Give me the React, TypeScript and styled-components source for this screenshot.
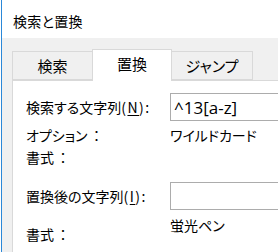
import React from "react";
import styled, { createGlobalStyle } from "styled-components";

const Global = createGlobalStyle`
  html, body { margin: 0; padding: 0; background: #ffffff; }
  body {
    font-family: "Noto Sans CJK JP", "Noto Sans", sans-serif;
    font-feature-settings: "palt";
    color: #000000;
  }
`;

const Frame = styled.div`
  width: 277px;
  height: 252px;
  margin-left: 1px;
  border-left: 1px solid #2b88d8;
  display: flex;
  flex-direction: column;
  overflow: hidden;
`;

const TitleBar = styled.div`
  height: 38px;
  flex: none;
  background: #ffffff;
  display: flex;
  align-items: center;
  padding-left: 11px;
  padding-top: 4px;
  box-sizing: border-box;
  font-size: 14px;
  letter-spacing: 0.3px;
`;

const Body = styled.div`
  flex: 1;
  background: #f0f0f0;
  padding: 11px 0 0 10px;
  display: flex;
  flex-direction: column;
`;

const TabRow = styled.div`
  display: flex;
  align-items: flex-end;
  height: 31px;
  position: relative;
  z-index: 1;
`;

const Tab = styled.div<{ $active?: boolean; $w: number }>`
  box-sizing: border-box;
  width: ${(p) => p.$w}px;
  height: ${(p) => (p.$active ? 32 : 29)}px;
  margin-bottom: ${(p) => (p.$active ? -1 : 0)}px;
  margin-left: ${(p) => (p.$active ? -1 : 0)}px;
  margin-right: ${(p) => (p.$active ? -1 : 0)}px;
  border: 1px solid #d9d9d9;
  border-bottom: ${(p) => (p.$active ? "none" : "1px solid #d9d9d9")};
  background: ${(p) => (p.$active ? "#ffffff" : "#f0f0f0")};
  display: flex;
  justify-content: center;
  align-items: center;
  padding-bottom: ${(p) => (p.$active ? 5 : 0)}px;
  font-size: 15px;
  z-index: ${(p) => (p.$active ? 2 : 1)};
`;

const Panel = styled.div`
  flex: 1;
  background: #ffffff;
  border: 1px solid #d9d9d9;
  border-right: none;
  border-bottom: none;
  padding: 12px 0 0 13px;
  display: flex;
  flex-direction: column;
  font-size: 14px;
`;

const Row = styled.div<{ $h: number; $mt?: number; $align?: string }>`
  display: grid;
  grid-template-columns: 144px 1fr;
  height: ${(p) => p.$h}px;
  margin-top: ${(p) => p.$mt ?? 0}px;
  align-items: ${(p) => p.$align ?? "center"};
`;

const Label = styled.span<{ $pt?: number }>`
  white-space: nowrap;
  padding-top: ${(p) => p.$pt ?? 0}px;
  line-height: 20px;
`;

const Value = styled.span`
  white-space: nowrap;
  line-height: 20px;
`;

const Access = styled.span`
  letter-spacing: 1.5px;
`;

const Key = styled.span`
  text-decoration: underline;
  text-underline-offset: 2px;
`;

const Colon = styled.span`
  font-feature-settings: normal;
  margin-left: 2px;
`;

const Input = styled.div`
  box-sizing: border-box;
  height: 28px;
  border: 1px solid #acacac;
  border-right: none;
  background: #ffffff;
  padding-left: 3px;
  display: flex;
  align-items: center;
  font-family: "Open Sans", "Noto Sans", sans-serif;
  font-size: 17px;
  font-feature-settings: normal;
`;

export default function App() {
  return (
    <>
      <Global />
      <Frame>
        <TitleBar>検索と置換</TitleBar>
        <Body>
          <TabRow>
            <Tab $w={81}>検索</Tab>
            <Tab $w={80} $active>置換</Tab>
            <Tab $w={82}>ジャンプ</Tab>
          </TabRow>
          <Panel>
            <Row $h={28}>
              <Label>
                検索する文字列<Access>(<Key>N</Key>):</Access>
              </Label>
              <Input>^13[a-z]</Input>
            </Row>
            <Row $h={22} $mt={3}>
              <Label>
                オプション<Colon>：</Colon>
              </Label>
              <Value>ワイルドカード</Value>
            </Row>
            <Row $h={22}>
              <Label>
                書式<Colon>：</Colon>
              </Label>
              <Value />
            </Row>
            <Row $h={28} $mt={14}>
              <Label>
                置換後の文字列<Access>(<Key>I</Key>):</Access>
              </Label>
              <Input />
            </Row>
            <Row $h={34} $mt={5} $align="start">
              <Label $pt={9}>
                書式<Colon>：</Colon>
              </Label>
              <Value>蛍光ペン</Value>
            </Row>
          </Panel>
        </Body>
      </Frame>
    </>
  );
}
